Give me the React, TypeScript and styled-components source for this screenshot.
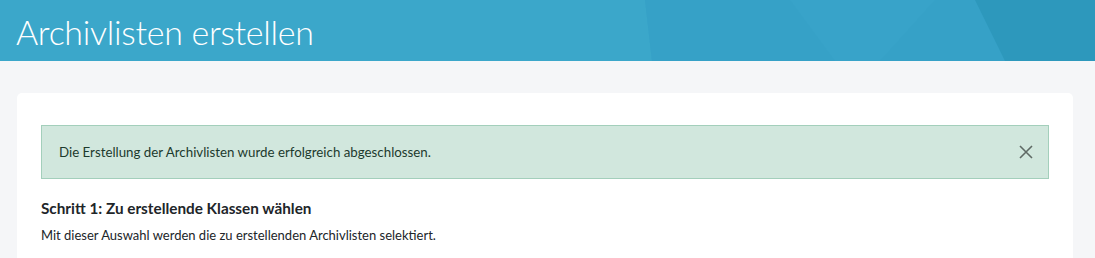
import React from "react";
import styled, { createGlobalStyle } from "styled-components";

const Global = createGlobalStyle`
  html, body { margin: 0; padding: 0; }
  body {
    background: #f5f6f8;
    font-family: Lato, "Open Sans", sans-serif;
    color: #212529;
  }
`;

const Header = styled.header`
  position: relative;
  height: 61px;
  background: #38a3c8;
  overflow: hidden;
  display: flex;
  align-items: center;
  padding: 0 16px;
`;

const HeaderArt = styled.svg`
  position: absolute;
  inset: 0;
  width: 100%;
  height: 100%;
`;

const Title = styled.h1`
  position: relative;
  margin: 0;
  font-weight: 300;
  font-size: 34px;
  color: #ffffff;
  letter-spacing: -0.3px;
  line-height: 1;
  padding-top: 2px;
`;

const Main = styled.main`
  padding: 32px 22px 0 17px;
`;

const Card = styled.section`
  background: #ffffff;
  border-radius: 5px;
  padding: 32px 24px 24px;
  min-height: 180px;
`;

const Alert = styled.div`
  display: flex;
  align-items: center;
  justify-content: space-between;
  height: 54px;
  box-sizing: border-box;
  padding: 0 14px 0 17px;
  background: #d1e7dd;
  border: 1px solid #a3cfbb;
  color: #1c3a2d;
  font-size: 13.3px;
`;

const CloseButton = styled.button`
  border: none;
  background: transparent;
  padding: 0;
  width: 16px;
  height: 16px;
  display: flex;
  align-items: center;
  justify-content: center;
  cursor: pointer;
`;

const StepTitle = styled.h3`
  margin: 20px 0 0;
  font-size: 15.3px;
  font-weight: 700;
  color: #212529;
`;

const StepText = styled.p`
  margin: 10px 0 0;
  font-size: 13px;
  color: #212529;
`;

export default function App() {
  return (
    <>
      <Global />
      <Header>
        <HeaderArt viewBox="0 0 1095 61" preserveAspectRatio="none">
          <polygon points="0,0 10,0 0,40" fill="#3399bf" />
          <polygon points="0,0 645,0 652,61 0,61" fill="#3ba7ca" />
          <polygon points="645,0 1095,0 1095,61 652,61" fill="#36a1c7" />
          <polygon points="790,0 935,0 880,61 835,61" fill="#38a3c9" />
          <polygon points="975,0 1095,0 1095,61 1005,61" fill="#2d98bc" />
        </HeaderArt>
        <Title>Archivlisten erstellen</Title>
      </Header>
      <Main>
        <Card>
          <Alert>
            <span>Die Erstellung der Archivlisten wurde erfolgreich abgeschlossen.</span>
            <CloseButton aria-label="Schließen">
              <svg width="14" height="14" viewBox="0 0 14 14">
                <path d="M1 1 L13 13 M13 1 L1 13" stroke="#5f6a65" strokeWidth="1.6" fill="none" />
              </svg>
            </CloseButton>
          </Alert>
          <StepTitle>Schritt 1: Zu erstellende Klassen wählen</StepTitle>
          <StepText>Mit dieser Auswahl werden die zu erstellenden Archivlisten selektiert.</StepText>
        </Card>
      </Main>
    </>
  );
}
